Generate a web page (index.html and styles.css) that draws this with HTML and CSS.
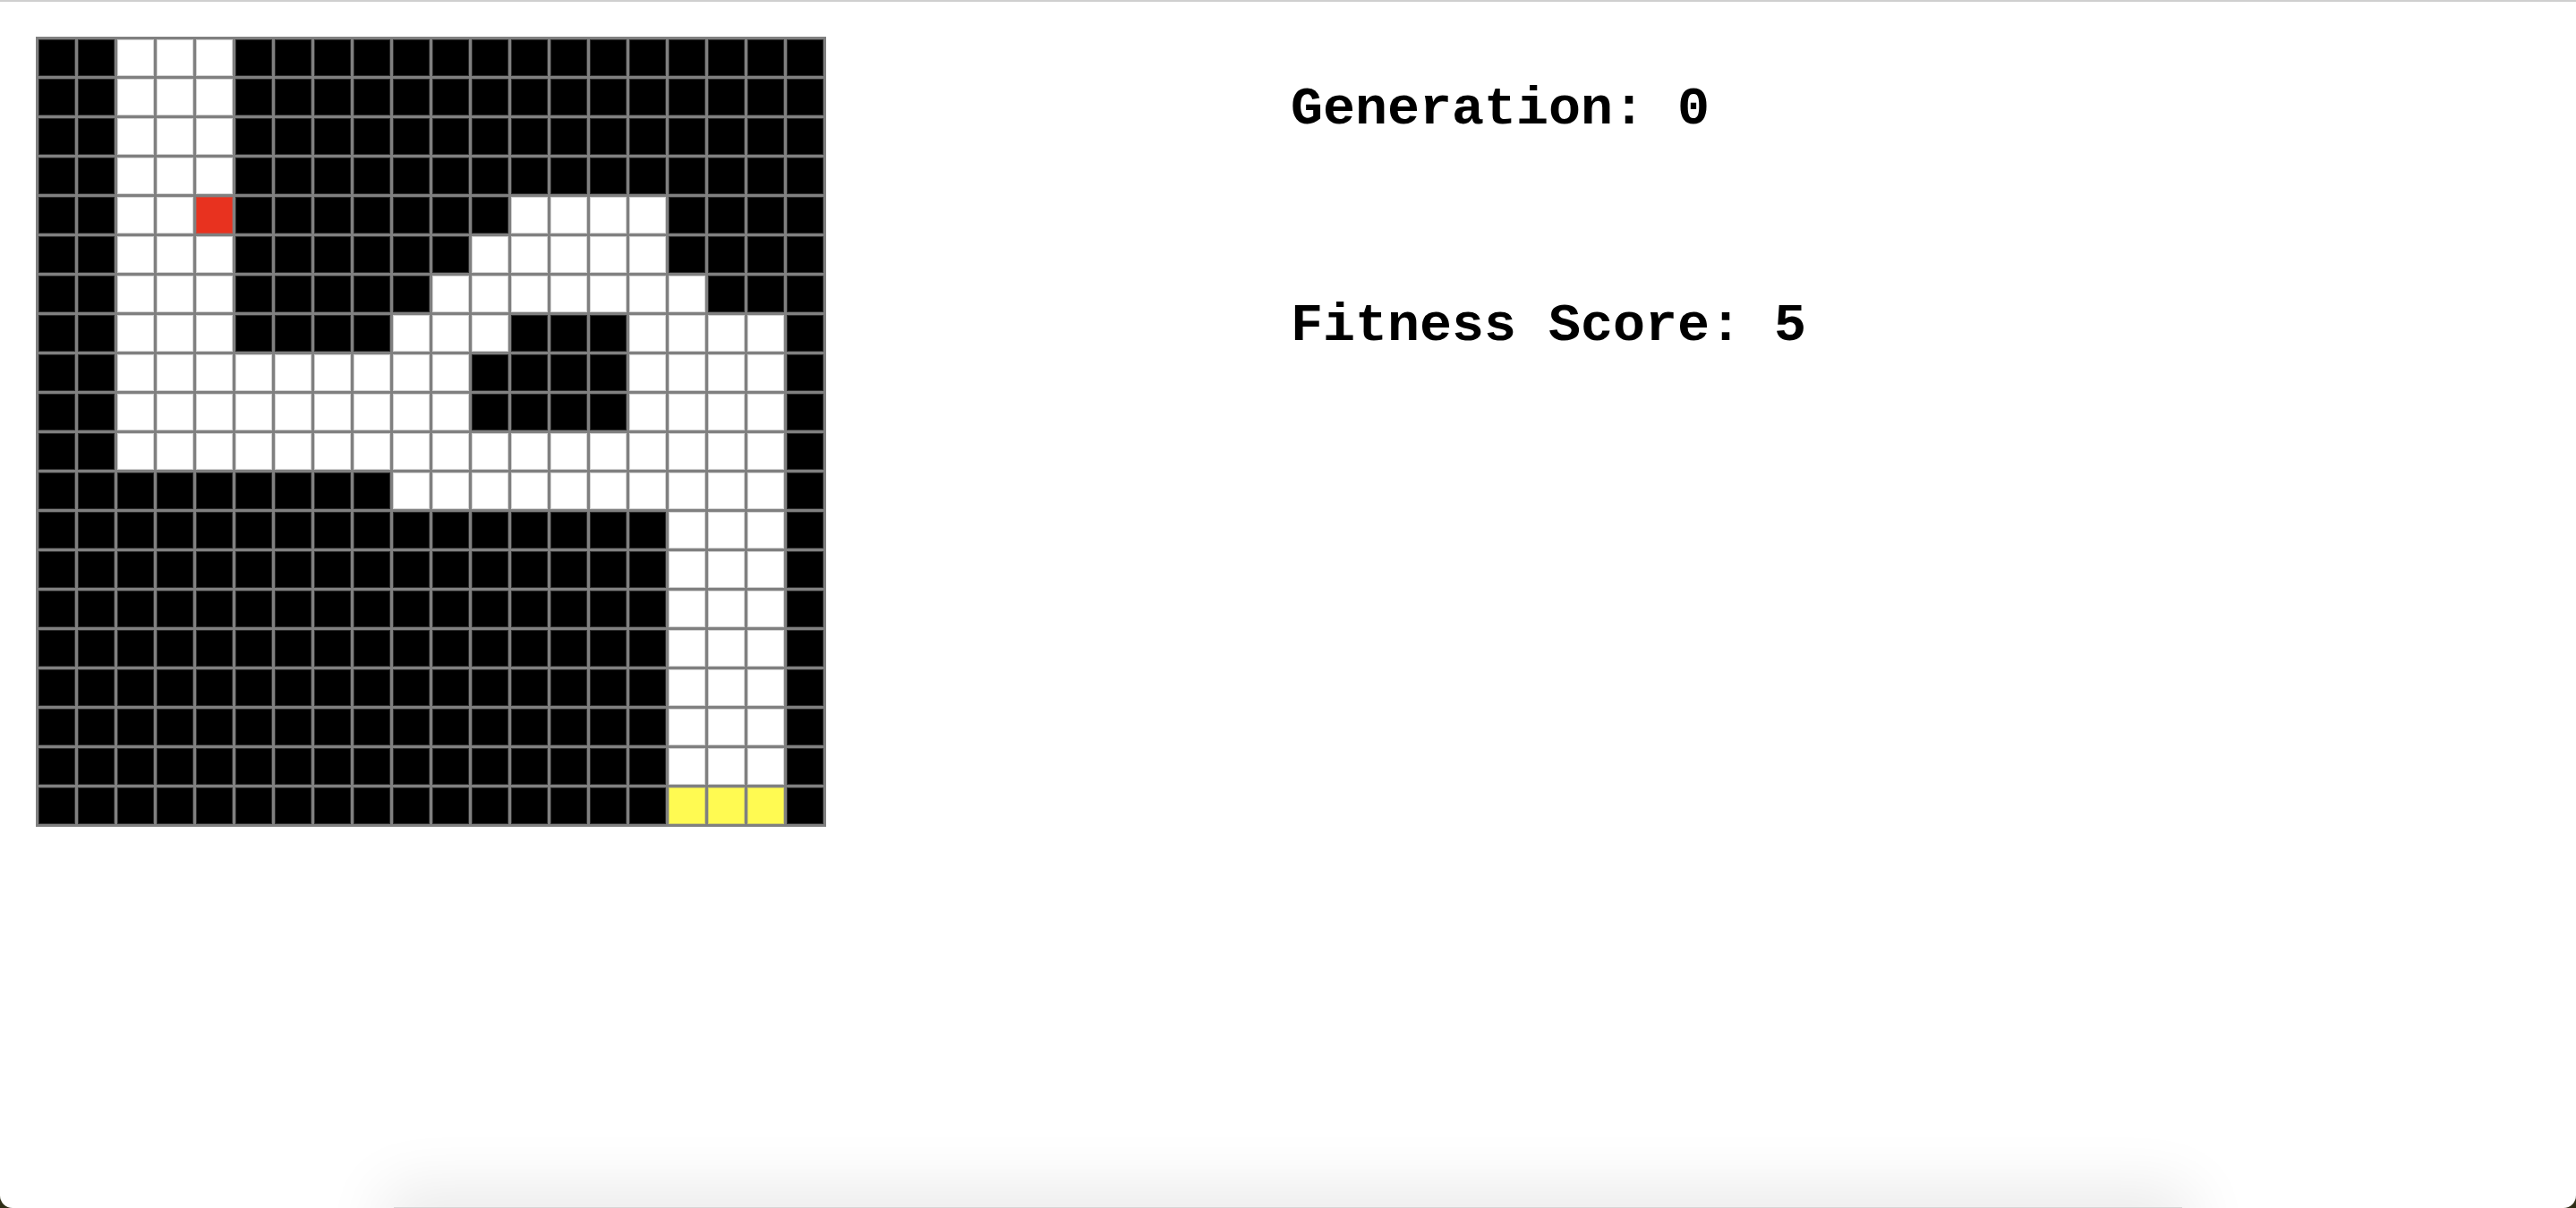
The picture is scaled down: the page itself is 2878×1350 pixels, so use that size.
FILE: index.html
```html
<!DOCTYPE html>
<html lang="en">
<head>
<meta charset="utf-8">
<title>Maze Genetic Algorithm</title>
<link rel="stylesheet" href="styles.css">
</head>
<body>
<div class="window">
  <main class="main">
    <div class="maze">
      <i class="b"></i><i class="b"></i><i class="w"></i><i class="w"></i><i class="w"></i><i class="b"></i><i class="b"></i><i class="b"></i><i class="b"></i><i class="b"></i><i class="b"></i><i class="b"></i><i class="b"></i><i class="b"></i><i class="b"></i><i class="b"></i><i class="b"></i><i class="b"></i><i class="b"></i><i class="b"></i>
      <i class="b"></i><i class="b"></i><i class="w"></i><i class="w"></i><i class="w"></i><i class="b"></i><i class="b"></i><i class="b"></i><i class="b"></i><i class="b"></i><i class="b"></i><i class="b"></i><i class="b"></i><i class="b"></i><i class="b"></i><i class="b"></i><i class="b"></i><i class="b"></i><i class="b"></i><i class="b"></i>
      <i class="b"></i><i class="b"></i><i class="w"></i><i class="w"></i><i class="w"></i><i class="b"></i><i class="b"></i><i class="b"></i><i class="b"></i><i class="b"></i><i class="b"></i><i class="b"></i><i class="b"></i><i class="b"></i><i class="b"></i><i class="b"></i><i class="b"></i><i class="b"></i><i class="b"></i><i class="b"></i>
      <i class="b"></i><i class="b"></i><i class="w"></i><i class="w"></i><i class="w"></i><i class="b"></i><i class="b"></i><i class="b"></i><i class="b"></i><i class="b"></i><i class="b"></i><i class="b"></i><i class="b"></i><i class="b"></i><i class="b"></i><i class="b"></i><i class="b"></i><i class="b"></i><i class="b"></i><i class="b"></i>
      <i class="b"></i><i class="b"></i><i class="w"></i><i class="w"></i><i class="r"></i><i class="b"></i><i class="b"></i><i class="b"></i><i class="b"></i><i class="b"></i><i class="b"></i><i class="b"></i><i class="w"></i><i class="w"></i><i class="w"></i><i class="w"></i><i class="b"></i><i class="b"></i><i class="b"></i><i class="b"></i>
      <i class="b"></i><i class="b"></i><i class="w"></i><i class="w"></i><i class="w"></i><i class="b"></i><i class="b"></i><i class="b"></i><i class="b"></i><i class="b"></i><i class="b"></i><i class="w"></i><i class="w"></i><i class="w"></i><i class="w"></i><i class="w"></i><i class="b"></i><i class="b"></i><i class="b"></i><i class="b"></i>
      <i class="b"></i><i class="b"></i><i class="w"></i><i class="w"></i><i class="w"></i><i class="b"></i><i class="b"></i><i class="b"></i><i class="b"></i><i class="b"></i><i class="w"></i><i class="w"></i><i class="w"></i><i class="w"></i><i class="w"></i><i class="w"></i><i class="w"></i><i class="b"></i><i class="b"></i><i class="b"></i>
      <i class="b"></i><i class="b"></i><i class="w"></i><i class="w"></i><i class="w"></i><i class="b"></i><i class="b"></i><i class="b"></i><i class="b"></i><i class="w"></i><i class="w"></i><i class="w"></i><i class="b"></i><i class="b"></i><i class="b"></i><i class="w"></i><i class="w"></i><i class="w"></i><i class="w"></i><i class="b"></i>
      <i class="b"></i><i class="b"></i><i class="w"></i><i class="w"></i><i class="w"></i><i class="w"></i><i class="w"></i><i class="w"></i><i class="w"></i><i class="w"></i><i class="w"></i><i class="b"></i><i class="b"></i><i class="b"></i><i class="b"></i><i class="w"></i><i class="w"></i><i class="w"></i><i class="w"></i><i class="b"></i>
      <i class="b"></i><i class="b"></i><i class="w"></i><i class="w"></i><i class="w"></i><i class="w"></i><i class="w"></i><i class="w"></i><i class="w"></i><i class="w"></i><i class="w"></i><i class="b"></i><i class="b"></i><i class="b"></i><i class="b"></i><i class="w"></i><i class="w"></i><i class="w"></i><i class="w"></i><i class="b"></i>
      <i class="b"></i><i class="b"></i><i class="w"></i><i class="w"></i><i class="w"></i><i class="w"></i><i class="w"></i><i class="w"></i><i class="w"></i><i class="w"></i><i class="w"></i><i class="w"></i><i class="w"></i><i class="w"></i><i class="w"></i><i class="w"></i><i class="w"></i><i class="w"></i><i class="w"></i><i class="b"></i>
      <i class="b"></i><i class="b"></i><i class="b"></i><i class="b"></i><i class="b"></i><i class="b"></i><i class="b"></i><i class="b"></i><i class="b"></i><i class="w"></i><i class="w"></i><i class="w"></i><i class="w"></i><i class="w"></i><i class="w"></i><i class="w"></i><i class="w"></i><i class="w"></i><i class="w"></i><i class="b"></i>
      <i class="b"></i><i class="b"></i><i class="b"></i><i class="b"></i><i class="b"></i><i class="b"></i><i class="b"></i><i class="b"></i><i class="b"></i><i class="b"></i><i class="b"></i><i class="b"></i><i class="b"></i><i class="b"></i><i class="b"></i><i class="b"></i><i class="w"></i><i class="w"></i><i class="w"></i><i class="b"></i>
      <i class="b"></i><i class="b"></i><i class="b"></i><i class="b"></i><i class="b"></i><i class="b"></i><i class="b"></i><i class="b"></i><i class="b"></i><i class="b"></i><i class="b"></i><i class="b"></i><i class="b"></i><i class="b"></i><i class="b"></i><i class="b"></i><i class="w"></i><i class="w"></i><i class="w"></i><i class="b"></i>
      <i class="b"></i><i class="b"></i><i class="b"></i><i class="b"></i><i class="b"></i><i class="b"></i><i class="b"></i><i class="b"></i><i class="b"></i><i class="b"></i><i class="b"></i><i class="b"></i><i class="b"></i><i class="b"></i><i class="b"></i><i class="b"></i><i class="w"></i><i class="w"></i><i class="w"></i><i class="b"></i>
      <i class="b"></i><i class="b"></i><i class="b"></i><i class="b"></i><i class="b"></i><i class="b"></i><i class="b"></i><i class="b"></i><i class="b"></i><i class="b"></i><i class="b"></i><i class="b"></i><i class="b"></i><i class="b"></i><i class="b"></i><i class="b"></i><i class="w"></i><i class="w"></i><i class="w"></i><i class="b"></i>
      <i class="b"></i><i class="b"></i><i class="b"></i><i class="b"></i><i class="b"></i><i class="b"></i><i class="b"></i><i class="b"></i><i class="b"></i><i class="b"></i><i class="b"></i><i class="b"></i><i class="b"></i><i class="b"></i><i class="b"></i><i class="b"></i><i class="w"></i><i class="w"></i><i class="w"></i><i class="b"></i>
      <i class="b"></i><i class="b"></i><i class="b"></i><i class="b"></i><i class="b"></i><i class="b"></i><i class="b"></i><i class="b"></i><i class="b"></i><i class="b"></i><i class="b"></i><i class="b"></i><i class="b"></i><i class="b"></i><i class="b"></i><i class="b"></i><i class="w"></i><i class="w"></i><i class="w"></i><i class="b"></i>
      <i class="b"></i><i class="b"></i><i class="b"></i><i class="b"></i><i class="b"></i><i class="b"></i><i class="b"></i><i class="b"></i><i class="b"></i><i class="b"></i><i class="b"></i><i class="b"></i><i class="b"></i><i class="b"></i><i class="b"></i><i class="b"></i><i class="w"></i><i class="w"></i><i class="w"></i><i class="b"></i>
      <i class="b"></i><i class="b"></i><i class="b"></i><i class="b"></i><i class="b"></i><i class="b"></i><i class="b"></i><i class="b"></i><i class="b"></i><i class="b"></i><i class="b"></i><i class="b"></i><i class="b"></i><i class="b"></i><i class="b"></i><i class="b"></i><i class="y"></i><i class="y"></i><i class="y"></i><i class="b"></i>
    </div>
    <section class="stats">
      <p class="stat">Generation: 0</p>
      <p class="stat">Fitness Score: 5</p>
    </section>
  </main>
  <div class="dock-shadow"></div>
</div>
</body>
</html>
```

FILE: styles.css
```css
html, body {
  margin: 0;
  padding: 0;
  height: 100%;
  overflow: hidden;
}

body {
  background: #2f2e17;
}

.window {
  position: relative;
  height: 1350px;
  box-sizing: border-box;
  background: #ffffff;
  border-top: 2px solid #cfcfcf;
  border-radius: 0 0 14px 14px;
  overflow: hidden;
}

.main {
  display: flex;
  align-items: flex-start;
  padding: 39px 0 0 40px;
}

.maze {
  display: grid;
  grid-template-columns: repeat(20, 41px);
  grid-auto-rows: 41px;
  gap: 3px;
  padding: 3px;
  background: #808080;
  flex: none;
}

.maze i {
  display: block;
  box-shadow: inset 0 0 0 1px rgba(128, 128, 128, 0.35);
}

.maze .b { background: #000000; }
.maze .w { background: #ffffff; }
.maze .r { background: #e8321f; }
.maze .y { background: #fffa52; }

.stats {
  display: flex;
  flex-direction: column;
  gap: 174px;
  margin-left: 519px;
  margin-top: 47px;
}

.stat {
  margin: 0;
  font-family: "Liberation Mono", "Courier New", monospace;
  font-weight: bold;
  font-size: 60px;
  line-height: 68px;
  color: #000000;
  white-space: nowrap;
}

.dock-shadow {
  position: absolute;
  left: 440px;
  width: 1998px;
  top: 1347px;
  height: 60px;
  background: #d6d6d6;
  box-shadow: 0 -10px 70px 10px rgba(0, 0, 0, 0.09);
}
```
